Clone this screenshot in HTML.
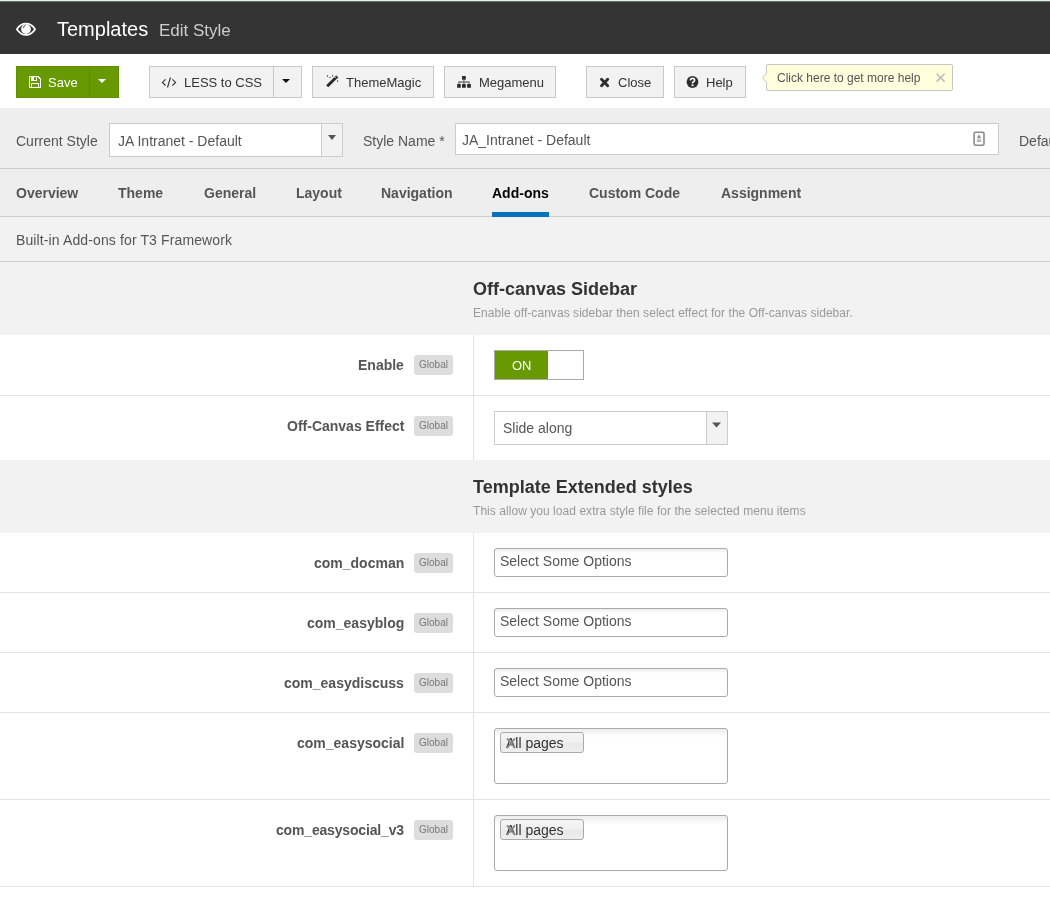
<!DOCTYPE html>
<html><head><meta charset="utf-8">
<style>
*{box-sizing:border-box;margin:0;padding:0}
html,body{width:1050px;height:918px;overflow:hidden;background:#fff;font-family:"Liberation Sans",sans-serif;color:#555}
.abs{position:absolute;white-space:nowrap}
.abs,.bt,.tab,.lb,.badge,.chz span,.chip span,.sec .h,.sec .s{will-change:transform}
svg{position:absolute;display:block}
#hdr{position:absolute;left:0;top:0;width:1050px;height:54px;background:#343434}
#hdrtop{position:absolute;left:0;top:0;width:1050px;height:1px;background:#dff0e5}
#hdrtop2{position:absolute;left:0;top:1px;width:1050px;height:1px;background:#6a6e6b}
.btn{position:absolute;top:66px;height:32px;background:#f2f2f2;border:1px solid #c9c9c9}
.bt{position:absolute;top:76px;font-size:13px;line-height:13px;color:#333;white-space:nowrap}
#band{position:absolute;left:0;top:108px;width:1050px;height:61px;background:#eee;border-bottom:1px solid #ccc}
#tabs{position:absolute;left:0;top:169px;width:1050px;height:48px;background:#eee;border-bottom:1px solid #ccc}
.tab{position:absolute;top:17px;font-size:14px;line-height:14px;font-weight:bold;color:#555;white-space:nowrap}
#desc{position:absolute;left:0;top:217px;width:1050px;height:45px;background:#f2f2f2;border-bottom:1px solid #ccc}
.sec{position:absolute;left:0;width:1050px;background:#f2f2f2}
.sec .h{position:absolute;left:473px;font-size:18px;line-height:18px;font-weight:bold;color:#333;white-space:nowrap}
.sec .s{position:absolute;left:473px;font-size:12px;line-height:12px;color:#999;white-space:nowrap;letter-spacing:0.05px}
.row{position:absolute;left:0;width:1050px;background:#fff;border-bottom:1px solid #e3e3e3}
.vl{position:absolute;left:473px;top:0;bottom:-1px;width:1px;background:#e3e3e3}
.lb{position:absolute;right:646px;top:23px;font-size:14px;line-height:14px;font-weight:bold;color:#555;white-space:nowrap}
.badge{position:absolute;left:414px;top:20px;width:39px;height:20px;background:#ddd;border-radius:3px;font-size:10px;color:#777;text-align:center;line-height:20px}
.chz{position:absolute;left:494px;top:15px;width:234px;height:29px;border:1px solid #aaa;border-radius:3px;background:linear-gradient(#eee 1%,#fff 15%)}
.chz span{position:absolute;left:5px;top:5px;font-size:14px;line-height:14px;color:#555;white-space:nowrap}
.multi{position:absolute;left:494px;top:15px;width:234px;height:56px;border:1px solid #aaa;border-radius:3px;background:linear-gradient(#eee 1%,#fff 15%)}
.chip{position:absolute;left:5px;top:3px;width:84px;height:21px;border:1px solid #aaa;border-radius:3px;background:linear-gradient(#f4f4f4 0%,#f0f0f0 50%,#e8e8e8 52%,#eee 100%)}
.chip span{position:absolute;left:5px;top:3px;font-size:14px;line-height:14px;color:#333;white-space:nowrap}
</style></head><body>
<div id="hdr"></div><div id="hdrtop"></div><div id="hdrtop2"></div>
<svg style="left:14px;top:21px" width="24" height="17" viewBox="14 21 24 17">
  <path d="M16.9,29.3 C19.3,25.5 22.4,23.7 26,23.7 C29.6,23.7 32.7,25.5 35.1,29.3 C32.7,33.1 29.6,34.9 26,34.9 C22.4,34.9 19.3,33.1 16.9,29.3 Z" fill="none" stroke="#fff" stroke-width="1.7"/>
  <circle cx="26" cy="29.1" r="4.9" fill="#fff"/>
  <path d="M23.5,28.2 C23.5,26.6 24.3,25.6 25.6,25.3" fill="none" stroke="#343434" stroke-width="0.9"/>
</svg>
<div class="abs" style="left:57.4px;top:19px;font-size:20px;line-height:20px;color:#fff">Templates</div>
<div class="abs" style="left:159px;top:22px;font-size:17px;line-height:17px;color:#cdcdcd">Edit Style</div>

<!-- toolbar -->
<div class="btn" style="left:16px;width:103px;background:#679900;border-color:#5f8d00"></div>
<div class="abs" style="left:89px;top:67px;width:1px;height:30px;background:#5c8a00"></div>
<svg style="left:29px;top:76px" width="12" height="12" viewBox="0 0 12 12" shape-rendering="crispEdges">
  <path d="M0,0 H9 L12,3 V12 H0 Z M1,1 V11 H2 V7 H10 V11 H11 V3.4 L8.6,1 H8 V5 H2 V1 Z" fill="#fff" fill-rule="evenodd"/>
  <rect x="5" y="1" width="2" height="3" fill="#679900"/>
  <rect x="3" y="8" width="6" height="3" fill="#679900"/>
</svg>
<div class="bt" style="left:48px;color:#fff">Save</div>
<svg style="left:98px;top:79px" width="8" height="4" viewBox="0 0 8 4"><path d="M0,0 H8 L4,4 Z" fill="#fff"/></svg>

<div class="btn" style="left:149px;width:153px"></div>
<div class="abs" style="left:273px;top:67px;width:1px;height:30px;background:#c9c9c9"></div>
<svg style="left:158px;top:74px" width="22" height="16" viewBox="158 74 22 16">
  <path d="M165.6,79.3 L162.4,82.4 L165.6,85.5 M172.4,79.3 L175.6,82.4 L172.4,85.5 M170.5,77.3 L167.5,87.5" fill="none" stroke="#333" stroke-width="1.15"/>
</svg>
<div class="bt" style="left:184px">LESS to CSS</div>
<svg style="left:282px;top:79px" width="8" height="4" viewBox="0 0 8 4"><path d="M0,0 H8 L4,4 Z" fill="#111"/></svg>

<div class="btn" style="left:312px;width:122px"></div>
<svg style="left:324px;top:73px" width="16" height="16" viewBox="324 73 16 16">
  <path d="M327.2,86.3 L337.3,76.2" stroke="#2a2a2a" stroke-width="3" stroke-linecap="butt"/>
  <path d="M334.7,78 L336.3,76.4" stroke="#f2f2f2" stroke-width="0.9"/>
  <path d="M327.4,75 V76.8 M332.6,75 V76.6 M337.6,80.2 V82 M329.2,77.4 H330.6" stroke="#444" stroke-width="0.9"/>
</svg>
<div class="bt" style="left:346px">ThemeMagic</div>

<div class="btn" style="left:444px;width:112px"></div>
<svg style="left:456px;top:75px" width="16" height="14" viewBox="456 75 16 14">
  <rect x="462" y="76.1" width="3.8" height="3.7" rx="0.6" fill="#2a2a2a"/>
  <rect x="457.1" y="84.1" width="3.7" height="3.7" rx="0.6" fill="#2a2a2a"/>
  <rect x="462" y="84.1" width="3.8" height="3.7" rx="0.6" fill="#2a2a2a"/>
  <rect x="467.1" y="84.1" width="3.8" height="3.7" rx="0.6" fill="#2a2a2a"/>
  <path d="M463.9,79.8 V84 M458.9,84 V82 H469 V84" fill="none" stroke="#777" stroke-width="1.3"/>
</svg>
<div class="bt" style="left:479px">Megamenu</div>

<div class="btn" style="left:586px;width:78px"></div>
<svg style="left:598px;top:76px" width="13" height="13" viewBox="598 76 13 13">
  <path d="M601.5,79.3 L607.7,85.7 M607.7,79.3 L601.5,85.7" stroke="#2e2e2e" stroke-width="2.9" stroke-linecap="round"/>
</svg>
<div class="bt" style="left:618px">Close</div>

<div class="btn" style="left:674px;width:72px"></div>
<svg style="left:685px;top:75px" width="15" height="15" viewBox="685 75 15 15">
  <circle cx="692.5" cy="82" r="5.9" fill="#2e2e2e"/>
  <path d="M690.3,80.4 Q690.6,78.4 692.6,78.4 Q694.6,78.4 694.6,80.2 Q694.6,81.4 693,82.1 Q692.5,82.4 692.5,83.4" fill="none" stroke="#fff" stroke-width="1.6"/>
  <rect x="691.6" y="84.4" width="1.9" height="1.8" fill="#fff"/>
</svg>
<div class="bt" style="left:706px">Help</div>

<!-- tooltip -->
<div class="abs" style="left:766px;top:64px;width:187px;height:27px;background:#ffffdd;border:1px solid #c6c6c2;border-radius:2px"></div>
<svg style="left:760px;top:70px" width="8" height="16" viewBox="760 70 8 16">
  <path d="M767,72.5 L762.5,77.7 L767,83" fill="#ffffdd" stroke="#c6c6c2" stroke-width="1"/>
  <rect x="767" y="71" width="1" height="14" fill="#ffffdd"/>
</svg>
<div class="abs" style="left:777px;top:72px;font-size:12px;line-height:12px;color:#555">Click here to get more help</div>
<svg style="left:934px;top:71px" width="13" height="13" viewBox="934 71 13 13">
  <path d="M936.6,73.8 L944.6,81.6 M944.6,73.8 L936.6,81.6" stroke="#bbb" stroke-width="1.5"/>
</svg>

<!-- band -->
<div id="band"></div>
<div class="abs" style="left:16px;top:134px;font-size:14px;line-height:14px;color:#555">Current Style</div>
<div class="abs" style="left:109px;top:123px;width:234px;height:34px;background:#fff;border:1px solid #ccc"></div>
<div class="abs" style="left:321px;top:124px;width:21px;height:32px;background:#f2f2f2;border-left:1px solid #ccc"></div>
<svg style="left:328px;top:135px" width="8" height="5" viewBox="0 0 8 5"><path d="M0,0 H8 L4,5 Z" fill="#555"/></svg>
<div class="abs" style="left:118px;top:134px;font-size:14px;line-height:14px;color:#555">JA Intranet - Default</div>
<div class="abs" style="left:363px;top:134px;font-size:14px;line-height:14px;color:#555">Style Name *</div>
<div class="abs" style="left:455px;top:123px;width:544px;height:32px;background:#fff;border:1px solid #ccc"></div>
<div class="abs" style="left:462px;top:133px;font-size:14px;line-height:14px;color:#555">JA_Intranet - Default</div>
<svg style="left:972px;top:130px" width="14" height="18" viewBox="972 130 14 18">
  <rect x="974.1" y="132.3" width="9.9" height="13" rx="1.5" fill="none" stroke="#8a8a8a" stroke-width="1.6"/>
  <path d="M976.9,138.3 L979,134.3 L981.1,138.3 Z" fill="#8a8a8a"/>
  <rect x="976.8" y="139.4" width="4.3" height="1.2" fill="#9a9a9a"/>
  <rect x="976.8" y="141" width="4.3" height="1.1" fill="#b0b0b0"/>
</svg>
<div class="abs" style="left:1019px;top:134px;font-size:14px;line-height:14px;color:#555">Default</div>

<!-- tabs -->
<div id="tabs">
  <div class="tab" style="left:16px">Overview</div>
  <div class="tab" style="left:118px">Theme</div>
  <div class="tab" style="left:204px">General</div>
  <div class="tab" style="left:296px">Layout</div>
  <div class="tab" style="left:381px">Navigation</div>
  <div class="tab" style="left:492px;color:#000">Add-ons</div>
  <div class="tab" style="left:589px">Custom Code</div>
  <div class="tab" style="left:721px">Assignment</div>
  <div class="abs" style="left:492px;top:43px;width:57px;height:5px;background:#0872ba"></div>
</div>
<div id="desc"><div class="abs" style="left:16px;top:16px;font-size:14px;line-height:14px;color:#555;letter-spacing:0.12px">Built-in Add-ons for T3 Framework</div></div>

<div class="sec" style="top:262px;height:73px"><div class="h" style="top:18px">Off-canvas Sidebar</div><div class="s" style="top:45px">Enable off-canvas sidebar then select effect for the Off-canvas sidebar.</div></div>

<div class="row" style="top:335px;height:61px"><div class="vl"></div><div class="lb">Enable</div><div class="badge">Global</div>
  <div class="abs" style="left:494px;top:15px;width:90px;height:30px;border:1px solid #aaa;background:#fff"></div>
  <div class="abs" style="left:495px;top:16px;width:53px;height:28px;background:#679900"></div>
  <div class="abs" style="left:512px;top:24px;font-size:13px;line-height:13px;color:#fff">ON</div>
</div>
<div class="row" style="top:396px;height:64px;border-bottom:0"><div class="vl"></div><div class="lb">Off-Canvas Effect</div><div class="badge">Global</div>
  <div class="abs" style="left:494px;top:15px;width:234px;height:34px;background:#fff;border:1px solid #ccc"></div>
  <div class="abs" style="left:706px;top:16px;width:21px;height:32px;background:#f2f2f2;border-left:1px solid #ccc"></div>
  <svg style="left:712px;top:26px" width="9" height="6" viewBox="0 0 9 5"><path d="M0,0 H9 L4.5,5 Z" fill="#555"/></svg>
  <div class="abs" style="left:503px;top:25px;font-size:14px;line-height:14px;color:#555">Slide along</div>
</div>

<div class="sec" style="top:460px;height:73px"><div class="h" style="top:18px">Template Extended styles</div><div class="s" style="top:45px">This allow you load extra style file for the selected menu items</div></div>

<div class="row" style="top:533px;height:60px"><div class="vl"></div><div class="lb">com_docman</div><div class="badge">Global</div><div class="chz"><span>Select Some Options</span></div></div>
<div class="row" style="top:593px;height:60px"><div class="vl"></div><div class="lb">com_easyblog</div><div class="badge">Global</div><div class="chz"><span>Select Some Options</span></div></div>
<div class="row" style="top:653px;height:60px"><div class="vl"></div><div class="lb">com_easydiscuss</div><div class="badge">Global</div><div class="chz"><span>Select Some Options</span></div></div>
<div class="row" style="top:713px;height:87px"><div class="vl"></div><div class="lb">com_easysocial</div><div class="badge">Global</div><div class="multi"><div class="chip"><span>All pages</span><svg style="left:5px;top:4px;will-change:transform" width="10" height="12" viewBox="0 0 10 12"><path d="M1,1.4 L9,11 M9,1.4 L1,11" stroke="#888" stroke-width="1.8"/></svg></div></div></div>
<div class="row" style="top:800px;height:87px"><div class="vl"></div><div class="lb" style="letter-spacing:-0.17px">com_easysocial_v3</div><div class="badge">Global</div><div class="multi"><div class="chip"><span>All pages</span><svg style="left:5px;top:4px;will-change:transform" width="10" height="12" viewBox="0 0 10 12"><path d="M1,1.4 L9,11 M9,1.4 L1,11" stroke="#888" stroke-width="1.8"/></svg></div></div></div>
</body></html>
